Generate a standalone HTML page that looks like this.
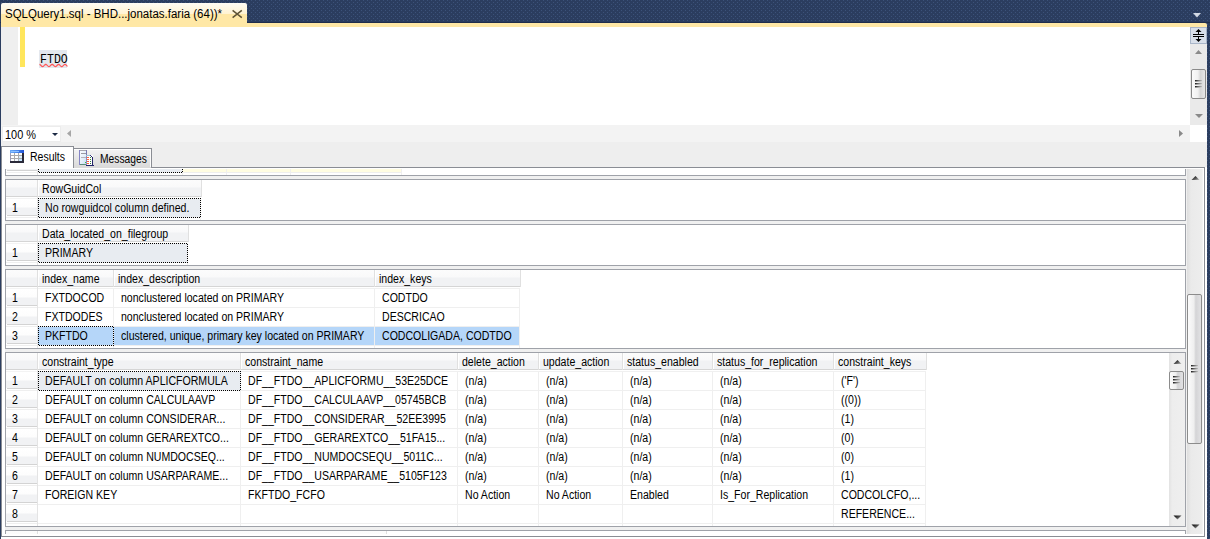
<!DOCTYPE html><html><head><meta charset="utf-8"><title>SSMS</title><style>
*{margin:0;padding:0;box-sizing:border-box}
html,body{width:1210px;height:539px;overflow:hidden;background:#2b3b5a}
body{position:relative}
div,span,svg{position:absolute;display:block}
.t{font-family:"Liberation Sans",sans-serif;font-size:12px;line-height:14px;white-space:pre;color:#000;transform:scaleX(0.88);transform-origin:0 0}
</style></head><body>
<svg style="left:0;top:0" width="1210" height="539"><defs><linearGradient id="ag" x1="0" y1="0" x2="1" y2="1"><stop offset="0" stop-color="#000"/><stop offset="0.55" stop-color="#555"/><stop offset="1" stop-color="#c8c8c8"/></linearGradient><pattern id="dots" width="4" height="4" patternUnits="userSpaceOnUse"><rect width="4" height="4" fill="#2b3d5f"/><rect x="3" y="0" width="1" height="1" fill="#3c5279"/><rect x="1" y="2" width="1" height="1" fill="#3c5279"/></pattern></defs><rect width="1210" height="539" fill="url(#dots)"/><rect x="0" y="22" width="1210" height="1" fill="#1f2e4c"/></svg>
<div style="left:1px;top:3px;width:246px;height:20px;border-radius:2px 2px 0 0;background:linear-gradient(#fffcf4 0px,#fff3d2 11px,#ffe8a6 11px,#ffe8a6 20px)"></div>
<span class="t" style="left:5px;top:7px;font-size:12px;line-height:14px;transform:scaleX(0.957)">SQLQuery1.sql - BHD...jonatas.faria (64))*</span>
<svg style="left:231px;top:9px" width="13" height="11"><path d="M1.6 1.4L10.8 8.6M10.8 1.4L1.6 8.6" stroke="#5f5334" stroke-width="1.5" fill="none"/></svg>
<svg style="left:1193px;top:13px" width="9" height="5"><path d="M0 0H8L4 4.5Z" fill="#d4dae5"/></svg>
<div style="left:1px;top:23px;width:1206px;height:4px;background:#ffe8a6;border-top-right-radius:2px"></div>
<div style="left:1px;top:27px;width:1189px;height:98px;background:#fff"></div>
<div style="left:1px;top:27px;width:17px;height:98px;background:#efefef"></div>
<div style="left:20px;top:27px;width:5px;height:40px;background:#ffe65c"></div>
<div style="left:39px;top:50px;width:28px;height:18px;background:#e4e8ee"></div>
<span class="t" style="left:40px;top:53px;font-family:'Liberation Mono',monospace;font-size:12.2px;line-height:14px;transform:scaleX(0.95)">FTDO</span>
<svg style="left:39px;top:63px" width="31" height="5"><polyline points="0.5,1.41 1.0,1.60 1.5,2.00 2.0,2.52 2.5,3.04 3.0,3.43 3.5,3.60 4.0,3.51 4.5,3.18 5.0,2.69 5.5,2.16 6.0,1.71 6.5,1.44 7.0,1.43 7.5,1.67 8.0,2.10 8.5,2.63 9.0,3.13 9.5,3.48 10.0,3.60 10.5,3.46 11.0,3.09 11.5,2.58 12.0,2.06 12.5,1.63 13.0,1.42 13.5,1.45 14.0,1.74 14.5,2.20 15.0,2.74 15.5,3.22 16.0,3.53 16.5,3.59 17.0,3.40 17.5,3.00 18.0,2.48 18.5,1.96 19.0,1.57 19.5,1.40 20.0,1.49 20.5,1.82 21.0,2.31 21.5,2.84 22.0,3.29 22.5,3.56 23.0,3.57 23.5,3.33 24.0,2.90 24.5,2.37 25.0,1.87 25.5,1.52 26.0,1.40 26.5,1.54 27.0,1.91 27.5,2.42 28.0,2.94 28.5,3.37" stroke="#ff5757" stroke-width="1.2" fill="none"/></svg>
<div style="left:1190px;top:27px;width:17px;height:98px;background:#eaeaea"></div>
<div style="left:1190px;top:27px;width:17px;height:17px;background:#d9e0ea;border:1px solid #a9b6c9"></div>
<svg style="left:1190px;top:27px" width="17" height="17"><path d="M5.5 5H11.5L8.5 2Z" fill="#000"/><rect x="8" y="4" width="1" height="3" fill="#000"/><rect x="3" y="7" width="11" height="1" fill="#000"/><rect x="3" y="9" width="11" height="1" fill="#000"/><rect x="8" y="10" width="1" height="3" fill="#000"/><path d="M5.5 12H11.5L8.5 15Z" fill="#000"/></svg>
<svg style="left:1194px;top:49px" width="9" height="6"><path d="M1 5H8L4.5 1Z" fill="#8a8a8a"/></svg>
<div style="left:1191px;top:69px;width:15px;height:30px;border:1px solid #8a8a8a;border-radius:2px;background:linear-gradient(to right,#fbfbfb,#f1f1f1 45%,#d6d6d6 65%,#e6e6e6)"></div>
<div style="left:1195px;top:80px;width:7px;height:2px;background:linear-gradient(rgba(255,255,255,0) 50%,rgba(240,240,240,0.55) 50%),linear-gradient(to right,#1a1a1a,#6a6a6a 45%,#c0c0c0)"></div>
<div style="left:1195px;top:83px;width:7px;height:2px;background:linear-gradient(rgba(255,255,255,0) 50%,rgba(240,240,240,0.55) 50%),linear-gradient(to right,#1a1a1a,#6a6a6a 45%,#c0c0c0)"></div>
<div style="left:1195px;top:86px;width:7px;height:2px;background:linear-gradient(rgba(255,255,255,0) 50%,rgba(240,240,240,0.55) 50%),linear-gradient(to right,#1a1a1a,#6a6a6a 45%,#c0c0c0)"></div>
<svg style="left:1194px;top:113px" width="10" height="6"><path d="M1 1H9L5 5Z" fill="#8a8a8a"/></svg>
<div style="left:1px;top:125px;width:1189px;height:17px;background:#f3f3f3"></div>
<div style="left:2px;top:126px;width:59px;height:16px;background:#fff;border:1px solid #ececec"></div>
<span class="t" style="left:5px;top:128px;font-size:12px;transform:scaleX(0.91)">100 %</span>
<svg style="left:52px;top:133px" width="6" height="4"><path d="M0 0H6L3 3Z" fill="#1c2a44"/></svg>
<svg style="left:66px;top:130px" width="6" height="8"><path d="M5 0V7L1 3.5Z" fill="#a6a6a6"/></svg>
<svg style="left:1178px;top:130px" width="6" height="8"><path d="M1 0V7L5 3.5Z" fill="#8a8a8a"/></svg>
<div style="left:1190px;top:125px;width:17px;height:17px;background:#fff"></div>
<div style="left:1px;top:142px;width:1206px;height:25px;background:#eeeeee"></div>
<div style="left:1px;top:167px;width:1206px;height:372px;background:#fff"></div>
<div style="left:73px;top:167px;width:1132px;height:1px;background:#8a8d94"></div>
<div style="left:1204px;top:167px;width:1px;height:370px;background:#8a8d94"></div>
<div style="left:1px;top:536px;width:1204px;height:1px;background:#8a8d94"></div>
<div style="left:1px;top:146px;width:73px;height:22px;background:#fff;border-top:1px solid #8a8d94;border-right:1px solid #8a8d94"></div>
<div style="left:73px;top:148px;width:79px;height:20px;border:1px solid #8a8d94;border-bottom:0;background:linear-gradient(#f4f4f4,#e6e6e6 50%,#d9d9d9)"></div>
<div style="left:74px;top:149px;width:77px;height:1px;background:#fff"></div>
<div style="left:150px;top:149px;width:1px;height:18px;background:#fbfbfb"></div>
<span class="t" style="left:30px;top:150px;transform:scaleX(0.875)">Results</span>
<span class="t" style="left:100px;top:152px;transform:scaleX(0.855)">Messages</span>
<svg style="left:10px;top:150px" width="14" height="13" shape-rendering="crispEdges"><defs><linearGradient id="hb" x1="0" y1="0" x2="1" y2="0"><stop offset="0" stop-color="#6aaaf8"/><stop offset="0.5" stop-color="#4a88ee"/><stop offset="1" stop-color="#1e50d4"/></linearGradient></defs><rect x="0" y="0" width="14" height="13" fill="#a9a9ad"/><rect x="0" y="0" width="14" height="3" fill="url(#hb)"/><rect x="1" y="1" width="8" height="1" fill="#8cc0ff"/><rect x="1" y="3" width="3" height="2" fill="#fff"/><rect x="5" y="3" width="3" height="2" fill="#fff"/><rect x="9" y="3" width="3" height="2" fill="#fafafa"/><rect x="1" y="6" width="3" height="2" fill="#fff"/><rect x="5" y="6" width="3" height="2" fill="#fff"/><rect x="9" y="6" width="3" height="2" fill="#d8f0ff"/><rect x="1" y="9" width="3" height="2" fill="#fff"/><rect x="5" y="9" width="3" height="2" fill="#f4faff"/><rect x="9" y="9" width="3" height="2" fill="#c8e6ff"/><rect x="0" y="11" width="14" height="2" fill="#2a2a3a"/><rect x="12" y="3" width="2" height="10" fill="#2a2a3a"/><rect x="0" y="3" width="1" height="8" fill="#9a9ab8"/></svg>
<svg style="left:79px;top:150px" width="15" height="16" shape-rendering="crispEdges"><defs><linearGradient id="pg" x1="0" y1="0" x2="1" y2="1"><stop offset="0" stop-color="#ffffff"/><stop offset="0.6" stop-color="#e2eefa"/><stop offset="1" stop-color="#b8d8f0"/></linearGradient></defs><rect x="0" y="0" width="8" height="15" fill="url(#pg)"/><rect x="0" y="0" width="8" height="1" fill="#a8a8b0"/><rect x="0" y="0" width="1" height="15" fill="#8484c4"/><rect x="7" y="0" width="1" height="15" fill="#7a7ab0"/><rect x="1" y="14" width="7" height="1" fill="#5a8a7a"/><rect x="2" y="3" width="5" height="1" fill="#9a9aa2"/><rect x="2" y="7" width="5" height="1" fill="#b4b4bc"/><rect x="6" y="12" width="1" height="1" fill="#40c040"/><rect x="7" y="5" width="7" height="11" fill="#fff"/><rect x="7" y="15" width="8" height="1" fill="#24246a"/><rect x="13" y="7" width="1" height="9" fill="#24246a"/><rect x="12" y="6" width="1" height="1" fill="#24246a"/><rect x="11" y="5" width="1" height="1" fill="#3a3a80"/><rect x="7" y="5" width="1" height="10" fill="#8a8ac0"/><rect x="7" y="5" width="4" height="1" fill="#a0c8d8"/><rect x="8" y="7" width="2" height="1" fill="#ff6040"/><rect x="8" y="9" width="2" height="1" fill="#ff6a3a"/><rect x="8" y="11" width="2" height="1" fill="#ff5a40"/><rect x="8" y="13" width="2" height="1" fill="#ff6030"/><rect x="11" y="7" width="1" height="1" fill="#3a8a3a"/><rect x="11" y="9" width="1" height="1" fill="#3a8a3a"/><rect x="11" y="11" width="1" height="1" fill="#2a7a3a"/><rect x="11" y="13" width="1" height="1" fill="#2a6a3a"/></svg>
<div style="left:5px;top:169px;width:1182px;height:365px;overflow:hidden;background:#f0f0f0">
<div style="left:0px;top:-35px;width:1181px;height:42px;border:1px solid #9fa2a9;background:#fff;overflow:hidden">
<div style="left:0px;top:0px;width:397px;height:16px;background:linear-gradient(#fcfcfc 0px,#f9f9fa 7px,#f1f2f4 8px,#f1f2f4 16px)"></div>
<div style="left:0px;top:16px;width:397px;height:1px;background:#d5d5d5"></div>
<div style="left:31px;top:0px;width:1px;height:17px;background:#e0e0e0"></div>
<div style="left:32px;top:0px;width:1px;height:16px;background:#fff"></div>
<div style="left:176px;top:0px;width:1px;height:17px;background:#e0e0e0"></div>
<div style="left:177px;top:0px;width:1px;height:16px;background:#fff"></div>
<div style="left:220px;top:0px;width:1px;height:17px;background:#e0e0e0"></div>
<div style="left:221px;top:0px;width:1px;height:16px;background:#fff"></div>
<div style="left:284px;top:0px;width:1px;height:17px;background:#e0e0e0"></div>
<div style="left:285px;top:0px;width:1px;height:16px;background:#fff"></div>
<div style="left:396px;top:0px;width:1px;height:17px;background:#e0e0e0"></div>
<div style="left:0px;top:19px;width:31px;height:16px;background:linear-gradient(#fff 0px,#fdfdfd 8px,#f1f2f4 9px,#f1f2f4 16px)"></div>
<div style="left:32px;top:19px;width:144px;height:18px;background:#e8ecf1"></div>
<div style="left:177px;top:19px;width:43px;height:18px;background:#fffde1"></div>
<div style="left:221px;top:19px;width:63px;height:18px;background:#fffde1"></div>
<div style="left:285px;top:19px;width:110px;height:18px;background:#fffde1"></div>
<div style="left:1px;top:35px;width:30px;height:1px;background:#d3d3d3"></div>
<div style="left:0px;top:37px;width:396px;height:1px;background:#efefef"></div>
<div style="left:176px;top:18px;width:1px;height:20px;background:#efefef"></div>
<div style="left:220px;top:18px;width:1px;height:20px;background:#efefef"></div>
<div style="left:284px;top:18px;width:1px;height:20px;background:#efefef"></div>
<div style="left:395px;top:18px;width:1px;height:20px;background:#efefef"></div>
<div style="left:176px;top:37px;width:1px;height:3px;background:#efefef"></div>
<div style="left:220px;top:37px;width:1px;height:3px;background:#efefef"></div>
<div style="left:284px;top:37px;width:1px;height:3px;background:#efefef"></div>
<div style="left:395px;top:37px;width:1px;height:3px;background:#efefef"></div>
<div style="left:31px;top:37px;width:1px;height:3px;background:#e4e4e4"></div>
<div style="left:0px;top:18px;width:31px;height:1px;background:#f3f3f3"></div>
<div style="left:32px;top:18px;width:364px;height:1px;background:#f0f0f0"></div>
<div style="left:31px;top:17px;width:1px;height:21px;background:#e4e4e4"></div>
<span class="t" style="left:6px;top:21px;">1</span>
<div style="left:32px;top:18px;width:145px;height:1px;background:repeating-linear-gradient(to right,#000 0 1px,transparent 1px 2px)"></div>
<div style="left:32px;top:37px;width:145px;height:1px;background:repeating-linear-gradient(to right,transparent 0 1px,#000 1px 2px)"></div>
<div style="left:32px;top:18px;width:1px;height:20px;background:repeating-linear-gradient(to bottom,#000 0 1px,transparent 1px 2px)"></div>
<div style="left:176px;top:18px;width:1px;height:20px;background:repeating-linear-gradient(to bottom,#000 0 1px,transparent 1px 2px)"></div>
</div>
<div style="left:0px;top:10px;width:1181px;height:42px;border:1px solid #9fa2a9;background:#fff;overflow:hidden">
<div style="left:0px;top:0px;width:196px;height:16px;background:linear-gradient(#fcfcfc 0px,#f9f9fa 7px,#f1f2f4 8px,#f1f2f4 16px)"></div>
<div style="left:0px;top:16px;width:196px;height:1px;background:#d5d5d5"></div>
<div style="left:31px;top:0px;width:1px;height:17px;background:#e0e0e0"></div>
<div style="left:32px;top:0px;width:1px;height:16px;background:#fff"></div>
<div style="left:195px;top:0px;width:1px;height:17px;background:#e0e0e0"></div>
<div style="left:0px;top:19px;width:31px;height:16px;background:linear-gradient(#fff 0px,#fdfdfd 8px,#f1f2f4 9px,#f1f2f4 16px)"></div>
<div style="left:32px;top:19px;width:162px;height:18px;background:#e8ecf1"></div>
<div style="left:1px;top:35px;width:30px;height:1px;background:#d3d3d3"></div>
<div style="left:0px;top:37px;width:195px;height:1px;background:#efefef"></div>
<div style="left:194px;top:18px;width:1px;height:20px;background:#efefef"></div>
<div style="left:194px;top:37px;width:1px;height:3px;background:#efefef"></div>
<div style="left:31px;top:37px;width:1px;height:3px;background:#e4e4e4"></div>
<div style="left:0px;top:18px;width:31px;height:1px;background:#f3f3f3"></div>
<div style="left:32px;top:18px;width:163px;height:1px;background:#f0f0f0"></div>
<div style="left:31px;top:17px;width:1px;height:21px;background:#e4e4e4"></div>
<span class="t" style="left:36px;top:2px;">RowGuidCol</span>
<span class="t" style="left:6px;top:21px;">1</span>
<span class="t" style="left:39px;top:21px;">No rowguidcol column defined.</span>
<div style="left:32px;top:18px;width:163px;height:1px;background:repeating-linear-gradient(to right,#000 0 1px,transparent 1px 2px)"></div>
<div style="left:32px;top:37px;width:163px;height:1px;background:repeating-linear-gradient(to right,transparent 0 1px,#000 1px 2px)"></div>
<div style="left:32px;top:18px;width:1px;height:20px;background:repeating-linear-gradient(to bottom,#000 0 1px,transparent 1px 2px)"></div>
<div style="left:194px;top:18px;width:1px;height:20px;background:repeating-linear-gradient(to bottom,#000 0 1px,transparent 1px 2px)"></div>
</div>
<div style="left:0px;top:55px;width:1181px;height:42px;border:1px solid #9fa2a9;background:#fff;overflow:hidden">
<div style="left:0px;top:0px;width:183px;height:16px;background:linear-gradient(#fcfcfc 0px,#f9f9fa 7px,#f1f2f4 8px,#f1f2f4 16px)"></div>
<div style="left:0px;top:16px;width:183px;height:1px;background:#d5d5d5"></div>
<div style="left:31px;top:0px;width:1px;height:17px;background:#e0e0e0"></div>
<div style="left:32px;top:0px;width:1px;height:16px;background:#fff"></div>
<div style="left:182px;top:0px;width:1px;height:17px;background:#e0e0e0"></div>
<div style="left:0px;top:19px;width:31px;height:16px;background:linear-gradient(#fff 0px,#fdfdfd 8px,#f1f2f4 9px,#f1f2f4 16px)"></div>
<div style="left:32px;top:19px;width:149px;height:18px;background:#e8ecf1"></div>
<div style="left:1px;top:35px;width:30px;height:1px;background:#d3d3d3"></div>
<div style="left:0px;top:37px;width:182px;height:1px;background:#efefef"></div>
<div style="left:181px;top:18px;width:1px;height:20px;background:#efefef"></div>
<div style="left:181px;top:37px;width:1px;height:3px;background:#efefef"></div>
<div style="left:31px;top:37px;width:1px;height:3px;background:#e4e4e4"></div>
<div style="left:0px;top:18px;width:31px;height:1px;background:#f3f3f3"></div>
<div style="left:32px;top:18px;width:150px;height:1px;background:#f0f0f0"></div>
<div style="left:31px;top:17px;width:1px;height:21px;background:#e4e4e4"></div>
<span class="t" style="left:36px;top:2px;">Data_located_on_filegroup</span>
<span class="t" style="left:6px;top:21px;">1</span>
<span class="t" style="left:39px;top:21px;">PRIMARY</span>
<div style="left:32px;top:18px;width:150px;height:1px;background:repeating-linear-gradient(to right,#000 0 1px,transparent 1px 2px)"></div>
<div style="left:32px;top:37px;width:150px;height:1px;background:repeating-linear-gradient(to right,transparent 0 1px,#000 1px 2px)"></div>
<div style="left:32px;top:18px;width:1px;height:20px;background:repeating-linear-gradient(to bottom,#000 0 1px,transparent 1px 2px)"></div>
<div style="left:181px;top:18px;width:1px;height:20px;background:repeating-linear-gradient(to bottom,transparent 0 1px,#000 1px 2px)"></div>
</div>
<div style="left:0px;top:100px;width:1181px;height:80px;border:1px solid #9fa2a9;background:#fff;overflow:hidden">
<div style="left:0px;top:0px;width:515px;height:16px;background:linear-gradient(#fcfcfc 0px,#f9f9fa 7px,#f1f2f4 8px,#f1f2f4 16px)"></div>
<div style="left:0px;top:16px;width:515px;height:1px;background:#d5d5d5"></div>
<div style="left:31px;top:0px;width:1px;height:17px;background:#e0e0e0"></div>
<div style="left:32px;top:0px;width:1px;height:16px;background:#fff"></div>
<div style="left:107px;top:0px;width:1px;height:17px;background:#e0e0e0"></div>
<div style="left:108px;top:0px;width:1px;height:16px;background:#fff"></div>
<div style="left:368px;top:0px;width:1px;height:17px;background:#e0e0e0"></div>
<div style="left:369px;top:0px;width:1px;height:16px;background:#fff"></div>
<div style="left:514px;top:0px;width:1px;height:17px;background:#e0e0e0"></div>
<div style="left:0px;top:19px;width:31px;height:16px;background:linear-gradient(#fff 0px,#fdfdfd 8px,#f1f2f4 9px,#f1f2f4 16px)"></div>
<div style="left:0px;top:38px;width:31px;height:16px;background:linear-gradient(#fff 0px,#fdfdfd 8px,#f1f2f4 9px,#f1f2f4 16px)"></div>
<div style="left:0px;top:57px;width:31px;height:16px;background:linear-gradient(#fff 0px,#fdfdfd 8px,#f1f2f4 9px,#f1f2f4 16px)"></div>
<div style="left:32px;top:57px;width:75px;height:18px;background:#b5d6f9"></div>
<div style="left:108px;top:57px;width:260px;height:18px;background:#b5d6f9"></div>
<div style="left:369px;top:57px;width:144px;height:18px;background:#b5d6f9"></div>
<div style="left:1px;top:35px;width:30px;height:1px;background:#d3d3d3"></div>
<div style="left:0px;top:37px;width:514px;height:1px;background:#efefef"></div>
<div style="left:107px;top:18px;width:1px;height:20px;background:#efefef"></div>
<div style="left:368px;top:18px;width:1px;height:20px;background:#efefef"></div>
<div style="left:513px;top:18px;width:1px;height:20px;background:#efefef"></div>
<div style="left:1px;top:54px;width:30px;height:1px;background:#d3d3d3"></div>
<div style="left:0px;top:56px;width:514px;height:1px;background:#efefef"></div>
<div style="left:107px;top:37px;width:1px;height:20px;background:#efefef"></div>
<div style="left:368px;top:37px;width:1px;height:20px;background:#efefef"></div>
<div style="left:513px;top:37px;width:1px;height:20px;background:#efefef"></div>
<div style="left:1px;top:73px;width:30px;height:1px;background:#d3d3d3"></div>
<div style="left:0px;top:75px;width:514px;height:1px;background:#efefef"></div>
<div style="left:107px;top:56px;width:1px;height:20px;background:#efefef"></div>
<div style="left:368px;top:56px;width:1px;height:20px;background:#efefef"></div>
<div style="left:513px;top:56px;width:1px;height:20px;background:#efefef"></div>
<div style="left:107px;top:75px;width:1px;height:3px;background:#efefef"></div>
<div style="left:368px;top:75px;width:1px;height:3px;background:#efefef"></div>
<div style="left:513px;top:75px;width:1px;height:3px;background:#efefef"></div>
<div style="left:31px;top:75px;width:1px;height:3px;background:#e4e4e4"></div>
<div style="left:0px;top:18px;width:31px;height:1px;background:#f3f3f3"></div>
<div style="left:32px;top:18px;width:482px;height:1px;background:#f0f0f0"></div>
<div style="left:31px;top:17px;width:1px;height:59px;background:#e4e4e4"></div>
<span class="t" style="left:36px;top:2px;">index_name</span>
<span class="t" style="left:112px;top:2px;">index_description</span>
<span class="t" style="left:373px;top:2px;">index_keys</span>
<span class="t" style="left:6px;top:21px;">1</span>
<span class="t" style="left:39px;top:21px;">FXTDOCOD</span>
<span class="t" style="left:115px;top:21px;">nonclustered located on PRIMARY</span>
<span class="t" style="left:376px;top:21px;">CODTDO</span>
<span class="t" style="left:6px;top:40px;">2</span>
<span class="t" style="left:39px;top:40px;">FXTDODES</span>
<span class="t" style="left:115px;top:40px;">nonclustered located on PRIMARY</span>
<span class="t" style="left:376px;top:40px;">DESCRICAO</span>
<span class="t" style="left:6px;top:59px;">3</span>
<span class="t" style="left:39px;top:59px;">PKFTDO</span>
<span class="t" style="left:115px;top:59px;">clustered, unique, primary key located on PRIMARY</span>
<span class="t" style="left:376px;top:59px;">CODCOLIGADA, CODTDO</span>
<div style="left:32px;top:56px;width:76px;height:1px;background:repeating-linear-gradient(to right,#000 0 1px,transparent 1px 2px)"></div>
<div style="left:32px;top:75px;width:76px;height:1px;background:repeating-linear-gradient(to right,transparent 0 1px,#000 1px 2px)"></div>
<div style="left:32px;top:56px;width:1px;height:20px;background:repeating-linear-gradient(to bottom,#000 0 1px,transparent 1px 2px)"></div>
<div style="left:107px;top:56px;width:1px;height:20px;background:repeating-linear-gradient(to bottom,transparent 0 1px,#000 1px 2px)"></div>
</div>
<div style="left:0px;top:183px;width:1181px;height:175px;border:1px solid #9fa2a9;background:#fff;overflow:hidden">
<div style="left:0px;top:0px;width:921px;height:16px;background:linear-gradient(#fcfcfc 0px,#f9f9fa 7px,#f1f2f4 8px,#f1f2f4 16px)"></div>
<div style="left:0px;top:16px;width:921px;height:1px;background:#d5d5d5"></div>
<div style="left:31px;top:0px;width:1px;height:17px;background:#e0e0e0"></div>
<div style="left:32px;top:0px;width:1px;height:16px;background:#fff"></div>
<div style="left:234px;top:0px;width:1px;height:17px;background:#e0e0e0"></div>
<div style="left:235px;top:0px;width:1px;height:16px;background:#fff"></div>
<div style="left:451px;top:0px;width:1px;height:17px;background:#e0e0e0"></div>
<div style="left:452px;top:0px;width:1px;height:16px;background:#fff"></div>
<div style="left:532px;top:0px;width:1px;height:17px;background:#e0e0e0"></div>
<div style="left:533px;top:0px;width:1px;height:16px;background:#fff"></div>
<div style="left:616px;top:0px;width:1px;height:17px;background:#e0e0e0"></div>
<div style="left:617px;top:0px;width:1px;height:16px;background:#fff"></div>
<div style="left:706px;top:0px;width:1px;height:17px;background:#e0e0e0"></div>
<div style="left:707px;top:0px;width:1px;height:16px;background:#fff"></div>
<div style="left:827px;top:0px;width:1px;height:17px;background:#e0e0e0"></div>
<div style="left:828px;top:0px;width:1px;height:16px;background:#fff"></div>
<div style="left:920px;top:0px;width:1px;height:17px;background:#e0e0e0"></div>
<div style="left:0px;top:19px;width:31px;height:16px;background:linear-gradient(#fff 0px,#fdfdfd 8px,#f1f2f4 9px,#f1f2f4 16px)"></div>
<div style="left:32px;top:19px;width:202px;height:18px;background:#e8ecf1"></div>
<div style="left:0px;top:38px;width:31px;height:16px;background:linear-gradient(#fff 0px,#fdfdfd 8px,#f1f2f4 9px,#f1f2f4 16px)"></div>
<div style="left:0px;top:57px;width:31px;height:16px;background:linear-gradient(#fff 0px,#fdfdfd 8px,#f1f2f4 9px,#f1f2f4 16px)"></div>
<div style="left:0px;top:76px;width:31px;height:16px;background:linear-gradient(#fff 0px,#fdfdfd 8px,#f1f2f4 9px,#f1f2f4 16px)"></div>
<div style="left:0px;top:95px;width:31px;height:16px;background:linear-gradient(#fff 0px,#fdfdfd 8px,#f1f2f4 9px,#f1f2f4 16px)"></div>
<div style="left:0px;top:114px;width:31px;height:16px;background:linear-gradient(#fff 0px,#fdfdfd 8px,#f1f2f4 9px,#f1f2f4 16px)"></div>
<div style="left:0px;top:133px;width:31px;height:16px;background:linear-gradient(#fff 0px,#fdfdfd 8px,#f1f2f4 9px,#f1f2f4 16px)"></div>
<div style="left:0px;top:152px;width:31px;height:16px;background:linear-gradient(#fff 0px,#fdfdfd 8px,#f1f2f4 9px,#f1f2f4 16px)"></div>
<div style="left:1px;top:35px;width:30px;height:1px;background:#d3d3d3"></div>
<div style="left:0px;top:37px;width:920px;height:1px;background:#efefef"></div>
<div style="left:234px;top:18px;width:1px;height:20px;background:#efefef"></div>
<div style="left:451px;top:18px;width:1px;height:20px;background:#efefef"></div>
<div style="left:532px;top:18px;width:1px;height:20px;background:#efefef"></div>
<div style="left:616px;top:18px;width:1px;height:20px;background:#efefef"></div>
<div style="left:706px;top:18px;width:1px;height:20px;background:#efefef"></div>
<div style="left:827px;top:18px;width:1px;height:20px;background:#efefef"></div>
<div style="left:919px;top:18px;width:1px;height:20px;background:#efefef"></div>
<div style="left:1px;top:54px;width:30px;height:1px;background:#d3d3d3"></div>
<div style="left:0px;top:56px;width:920px;height:1px;background:#efefef"></div>
<div style="left:234px;top:37px;width:1px;height:20px;background:#efefef"></div>
<div style="left:451px;top:37px;width:1px;height:20px;background:#efefef"></div>
<div style="left:532px;top:37px;width:1px;height:20px;background:#efefef"></div>
<div style="left:616px;top:37px;width:1px;height:20px;background:#efefef"></div>
<div style="left:706px;top:37px;width:1px;height:20px;background:#efefef"></div>
<div style="left:827px;top:37px;width:1px;height:20px;background:#efefef"></div>
<div style="left:919px;top:37px;width:1px;height:20px;background:#efefef"></div>
<div style="left:1px;top:73px;width:30px;height:1px;background:#d3d3d3"></div>
<div style="left:0px;top:75px;width:920px;height:1px;background:#efefef"></div>
<div style="left:234px;top:56px;width:1px;height:20px;background:#efefef"></div>
<div style="left:451px;top:56px;width:1px;height:20px;background:#efefef"></div>
<div style="left:532px;top:56px;width:1px;height:20px;background:#efefef"></div>
<div style="left:616px;top:56px;width:1px;height:20px;background:#efefef"></div>
<div style="left:706px;top:56px;width:1px;height:20px;background:#efefef"></div>
<div style="left:827px;top:56px;width:1px;height:20px;background:#efefef"></div>
<div style="left:919px;top:56px;width:1px;height:20px;background:#efefef"></div>
<div style="left:1px;top:92px;width:30px;height:1px;background:#d3d3d3"></div>
<div style="left:0px;top:94px;width:920px;height:1px;background:#efefef"></div>
<div style="left:234px;top:75px;width:1px;height:20px;background:#efefef"></div>
<div style="left:451px;top:75px;width:1px;height:20px;background:#efefef"></div>
<div style="left:532px;top:75px;width:1px;height:20px;background:#efefef"></div>
<div style="left:616px;top:75px;width:1px;height:20px;background:#efefef"></div>
<div style="left:706px;top:75px;width:1px;height:20px;background:#efefef"></div>
<div style="left:827px;top:75px;width:1px;height:20px;background:#efefef"></div>
<div style="left:919px;top:75px;width:1px;height:20px;background:#efefef"></div>
<div style="left:1px;top:111px;width:30px;height:1px;background:#d3d3d3"></div>
<div style="left:0px;top:113px;width:920px;height:1px;background:#efefef"></div>
<div style="left:234px;top:94px;width:1px;height:20px;background:#efefef"></div>
<div style="left:451px;top:94px;width:1px;height:20px;background:#efefef"></div>
<div style="left:532px;top:94px;width:1px;height:20px;background:#efefef"></div>
<div style="left:616px;top:94px;width:1px;height:20px;background:#efefef"></div>
<div style="left:706px;top:94px;width:1px;height:20px;background:#efefef"></div>
<div style="left:827px;top:94px;width:1px;height:20px;background:#efefef"></div>
<div style="left:919px;top:94px;width:1px;height:20px;background:#efefef"></div>
<div style="left:1px;top:130px;width:30px;height:1px;background:#d3d3d3"></div>
<div style="left:0px;top:132px;width:920px;height:1px;background:#efefef"></div>
<div style="left:234px;top:113px;width:1px;height:20px;background:#efefef"></div>
<div style="left:451px;top:113px;width:1px;height:20px;background:#efefef"></div>
<div style="left:532px;top:113px;width:1px;height:20px;background:#efefef"></div>
<div style="left:616px;top:113px;width:1px;height:20px;background:#efefef"></div>
<div style="left:706px;top:113px;width:1px;height:20px;background:#efefef"></div>
<div style="left:827px;top:113px;width:1px;height:20px;background:#efefef"></div>
<div style="left:919px;top:113px;width:1px;height:20px;background:#efefef"></div>
<div style="left:1px;top:149px;width:30px;height:1px;background:#d3d3d3"></div>
<div style="left:0px;top:151px;width:920px;height:1px;background:#efefef"></div>
<div style="left:234px;top:132px;width:1px;height:20px;background:#efefef"></div>
<div style="left:451px;top:132px;width:1px;height:20px;background:#efefef"></div>
<div style="left:532px;top:132px;width:1px;height:20px;background:#efefef"></div>
<div style="left:616px;top:132px;width:1px;height:20px;background:#efefef"></div>
<div style="left:706px;top:132px;width:1px;height:20px;background:#efefef"></div>
<div style="left:827px;top:132px;width:1px;height:20px;background:#efefef"></div>
<div style="left:919px;top:132px;width:1px;height:20px;background:#efefef"></div>
<div style="left:1px;top:168px;width:30px;height:1px;background:#d3d3d3"></div>
<div style="left:0px;top:170px;width:920px;height:1px;background:#efefef"></div>
<div style="left:234px;top:151px;width:1px;height:20px;background:#efefef"></div>
<div style="left:451px;top:151px;width:1px;height:20px;background:#efefef"></div>
<div style="left:532px;top:151px;width:1px;height:20px;background:#efefef"></div>
<div style="left:616px;top:151px;width:1px;height:20px;background:#efefef"></div>
<div style="left:706px;top:151px;width:1px;height:20px;background:#efefef"></div>
<div style="left:827px;top:151px;width:1px;height:20px;background:#efefef"></div>
<div style="left:919px;top:151px;width:1px;height:20px;background:#efefef"></div>
<div style="left:234px;top:170px;width:1px;height:3px;background:#efefef"></div>
<div style="left:451px;top:170px;width:1px;height:3px;background:#efefef"></div>
<div style="left:532px;top:170px;width:1px;height:3px;background:#efefef"></div>
<div style="left:616px;top:170px;width:1px;height:3px;background:#efefef"></div>
<div style="left:706px;top:170px;width:1px;height:3px;background:#efefef"></div>
<div style="left:827px;top:170px;width:1px;height:3px;background:#efefef"></div>
<div style="left:919px;top:170px;width:1px;height:3px;background:#efefef"></div>
<div style="left:31px;top:170px;width:1px;height:3px;background:#e4e4e4"></div>
<div style="left:0px;top:18px;width:31px;height:1px;background:#f3f3f3"></div>
<div style="left:32px;top:18px;width:888px;height:1px;background:#f0f0f0"></div>
<div style="left:31px;top:17px;width:1px;height:154px;background:#e4e4e4"></div>
<span class="t" style="left:36px;top:2px;">constraint_type</span>
<span class="t" style="left:239px;top:2px;">constraint_name</span>
<span class="t" style="left:456px;top:2px;">delete_action</span>
<span class="t" style="left:537px;top:2px;">update_action</span>
<span class="t" style="left:621px;top:2px;">status_enabled</span>
<span class="t" style="left:711px;top:2px;">status_for_replication</span>
<span class="t" style="left:832px;top:2px;">constraint_keys</span>
<span class="t" style="left:6px;top:21px;">1</span>
<span class="t" style="left:39px;top:21px;">DEFAULT on column APLICFORMULA</span>
<span class="t" style="left:242px;top:21px;">DF__FTDO__APLICFORMU__53E25DCE</span>
<span class="t" style="left:459px;top:21px;">(n/a)</span>
<span class="t" style="left:540px;top:21px;">(n/a)</span>
<span class="t" style="left:624px;top:21px;">(n/a)</span>
<span class="t" style="left:714px;top:21px;">(n/a)</span>
<span class="t" style="left:835px;top:21px;">('F')</span>
<span class="t" style="left:6px;top:40px;">2</span>
<span class="t" style="left:39px;top:40px;">DEFAULT on column CALCULAAVP</span>
<span class="t" style="left:242px;top:40px;">DF__FTDO__CALCULAAVP__05745BCB</span>
<span class="t" style="left:459px;top:40px;">(n/a)</span>
<span class="t" style="left:540px;top:40px;">(n/a)</span>
<span class="t" style="left:624px;top:40px;">(n/a)</span>
<span class="t" style="left:714px;top:40px;">(n/a)</span>
<span class="t" style="left:835px;top:40px;">((0))</span>
<span class="t" style="left:6px;top:59px;">3</span>
<span class="t" style="left:39px;top:59px;">DEFAULT on column CONSIDERAR...</span>
<span class="t" style="left:242px;top:59px;">DF__FTDO__CONSIDERAR__52EE3995</span>
<span class="t" style="left:459px;top:59px;">(n/a)</span>
<span class="t" style="left:540px;top:59px;">(n/a)</span>
<span class="t" style="left:624px;top:59px;">(n/a)</span>
<span class="t" style="left:714px;top:59px;">(n/a)</span>
<span class="t" style="left:835px;top:59px;">(1)</span>
<span class="t" style="left:6px;top:78px;">4</span>
<span class="t" style="left:39px;top:78px;">DEFAULT on column GERAREXTCO...</span>
<span class="t" style="left:242px;top:78px;">DF__FTDO__GERAREXTCO__51FA15...</span>
<span class="t" style="left:459px;top:78px;">(n/a)</span>
<span class="t" style="left:540px;top:78px;">(n/a)</span>
<span class="t" style="left:624px;top:78px;">(n/a)</span>
<span class="t" style="left:714px;top:78px;">(n/a)</span>
<span class="t" style="left:835px;top:78px;">(0)</span>
<span class="t" style="left:6px;top:97px;">5</span>
<span class="t" style="left:39px;top:97px;">DEFAULT on column NUMDOCSEQ...</span>
<span class="t" style="left:242px;top:97px;">DF__FTDO__NUMDOCSEQU__5011C...</span>
<span class="t" style="left:459px;top:97px;">(n/a)</span>
<span class="t" style="left:540px;top:97px;">(n/a)</span>
<span class="t" style="left:624px;top:97px;">(n/a)</span>
<span class="t" style="left:714px;top:97px;">(n/a)</span>
<span class="t" style="left:835px;top:97px;">(0)</span>
<span class="t" style="left:6px;top:116px;">6</span>
<span class="t" style="left:39px;top:116px;">DEFAULT on column USARPARAME...</span>
<span class="t" style="left:242px;top:116px;">DF__FTDO__USARPARAME__5105F123</span>
<span class="t" style="left:459px;top:116px;">(n/a)</span>
<span class="t" style="left:540px;top:116px;">(n/a)</span>
<span class="t" style="left:624px;top:116px;">(n/a)</span>
<span class="t" style="left:714px;top:116px;">(n/a)</span>
<span class="t" style="left:835px;top:116px;">(1)</span>
<span class="t" style="left:6px;top:135px;">7</span>
<span class="t" style="left:39px;top:135px;">FOREIGN KEY</span>
<span class="t" style="left:242px;top:135px;">FKFTDO_FCFO</span>
<span class="t" style="left:459px;top:135px;">No Action</span>
<span class="t" style="left:540px;top:135px;">No Action</span>
<span class="t" style="left:624px;top:135px;">Enabled</span>
<span class="t" style="left:714px;top:135px;">Is_For_Replication</span>
<span class="t" style="left:835px;top:135px;">CODCOLCFO,...</span>
<span class="t" style="left:6px;top:154px;">8</span>
<span class="t" style="left:835px;top:154px;">REFERENCE...</span>
<div style="left:32px;top:18px;width:203px;height:1px;background:repeating-linear-gradient(to right,#000 0 1px,transparent 1px 2px)"></div>
<div style="left:32px;top:37px;width:203px;height:1px;background:repeating-linear-gradient(to right,transparent 0 1px,#000 1px 2px)"></div>
<div style="left:32px;top:18px;width:1px;height:20px;background:repeating-linear-gradient(to bottom,#000 0 1px,transparent 1px 2px)"></div>
<div style="left:234px;top:18px;width:1px;height:20px;background:repeating-linear-gradient(to bottom,#000 0 1px,transparent 1px 2px)"></div>
<div style="left:1163px;top:0px;width:16px;height:173px;background:linear-gradient(to right,#e2e2e2,#ededed 20%,#efefef)"></div>
<svg style="left:1167px;top:6px" width="9" height="6"><path d="M0.5 5H8.5L4.5 1Z" fill="url(#ag)"/></svg>
<div style="left:1163px;top:18px;width:15px;height:19px;border:1px solid #8c8c8c;border-radius:2px;background:linear-gradient(to right,#fbfbfb,#efefef 45%,#d4d4d6 60%,#e2e2e4)"></div>
<div style="left:1167px;top:23px;width:7px;height:2px;background:linear-gradient(rgba(255,255,255,0) 50%,rgba(240,240,240,0.55) 50%),linear-gradient(to right,#1a1a1a,#6a6a6a 45%,#c0c0c0)"></div>
<div style="left:1167px;top:26px;width:7px;height:2px;background:linear-gradient(rgba(255,255,255,0) 50%,rgba(240,240,240,0.55) 50%),linear-gradient(to right,#1a1a1a,#6a6a6a 45%,#c0c0c0)"></div>
<div style="left:1167px;top:29px;width:7px;height:2px;background:linear-gradient(rgba(255,255,255,0) 50%,rgba(240,240,240,0.55) 50%),linear-gradient(to right,#1a1a1a,#6a6a6a 45%,#c0c0c0)"></div>
<svg style="left:1167px;top:162px" width="9" height="6"><path d="M0.5 0.5H8.5L4.5 4.5Z" fill="url(#ag)"/></svg>
</div>
<div style="left:0px;top:361px;width:1181px;height:42px;border:1px solid #9fa2a9;background:#fff;overflow:hidden">
<div style="left:0px;top:0px;width:381px;height:16px;background:linear-gradient(#fcfcfc 0px,#f9f9fa 7px,#f1f2f4 8px,#f1f2f4 16px)"></div>
<div style="left:0px;top:16px;width:381px;height:1px;background:#d5d5d5"></div>
<div style="left:31px;top:0px;width:1px;height:17px;background:#e0e0e0"></div>
<div style="left:32px;top:0px;width:1px;height:16px;background:#fff"></div>
<div style="left:380px;top:0px;width:1px;height:17px;background:#e0e0e0"></div>
<div style="left:0px;top:19px;width:31px;height:16px;background:linear-gradient(#fff 0px,#fdfdfd 8px,#f1f2f4 9px,#f1f2f4 16px)"></div>
<div style="left:1px;top:35px;width:30px;height:1px;background:#d3d3d3"></div>
<div style="left:0px;top:37px;width:380px;height:1px;background:#efefef"></div>
<div style="left:379px;top:18px;width:1px;height:20px;background:#efefef"></div>
<div style="left:379px;top:37px;width:1px;height:3px;background:#efefef"></div>
<div style="left:31px;top:37px;width:1px;height:3px;background:#e4e4e4"></div>
<div style="left:0px;top:18px;width:31px;height:1px;background:#f3f3f3"></div>
<div style="left:32px;top:18px;width:348px;height:1px;background:#f0f0f0"></div>
<div style="left:31px;top:17px;width:1px;height:21px;background:#e4e4e4"></div>
<span class="t" style="left:6px;top:21px;">1</span>
</div>
</div>
<div style="left:1187px;top:169px;width:16px;height:365px;background:linear-gradient(to right,#dedede,#eaeaea 25%,#ededed 90%,#f6f6f6)"></div>
<svg style="left:1191px;top:175px" width="9" height="6"><path d="M0.5 5H8.5L4.5 1Z" fill="url(#ag)"/></svg>
<div style="left:1187px;top:294px;width:15px;height:150px;border:1px solid #8c8c8c;border-radius:2px;background:linear-gradient(to right,#fbfbfb,#efefef 45%,#d4d4d6 60%,#e2e2e4)"></div>
<div style="left:1191px;top:365px;width:7px;height:2px;background:linear-gradient(rgba(255,255,255,0) 50%,rgba(240,240,240,0.55) 50%),linear-gradient(to right,#1a1a1a,#6a6a6a 45%,#c0c0c0)"></div>
<div style="left:1191px;top:368px;width:7px;height:2px;background:linear-gradient(rgba(255,255,255,0) 50%,rgba(240,240,240,0.55) 50%),linear-gradient(to right,#1a1a1a,#6a6a6a 45%,#c0c0c0)"></div>
<div style="left:1191px;top:371px;width:7px;height:2px;background:linear-gradient(rgba(255,255,255,0) 50%,rgba(240,240,240,0.55) 50%),linear-gradient(to right,#1a1a1a,#6a6a6a 45%,#c0c0c0)"></div>
<svg style="left:1191px;top:524px" width="9" height="6"><path d="M0.5 0.5H8.5L4.5 4.5Z" fill="url(#ag)"/></svg>
<div style="left:1px;top:146px;width:1px;height:391px;background:#8a8d94"></div>
</body></html>
